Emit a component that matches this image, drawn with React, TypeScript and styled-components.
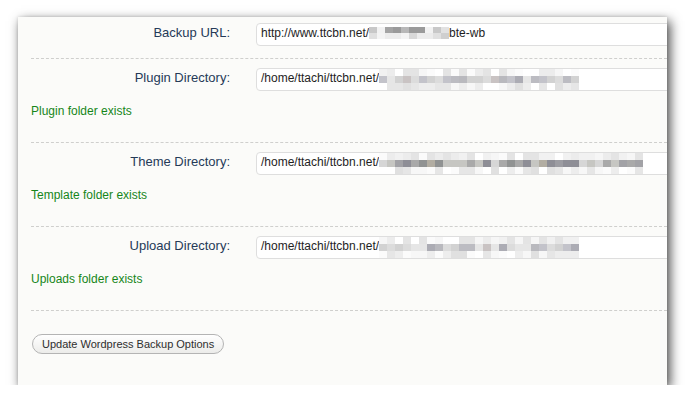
import React from "react";
import styled, { createGlobalStyle } from "styled-components";

const Global = createGlobalStyle`
  html, body { margin: 0; padding: 0; background: #ffffff; }
  body { font-family: "Liberation Sans", Arial, sans-serif; }
`;

const Panel = styled.form`
  margin: 17px 0 0 18px;
  width: 649px;
  background: #fbfbf9;
  box-shadow: 3px 4px 11px rgba(0, 0, 0, 0.72), 0 0 3px rgba(0, 0, 0, 0.12);
  overflow: hidden;
  padding-left: 13px;
  box-sizing: border-box;
`;

const Section = styled.div<{ $top: number; $bottom: number; $last?: boolean }>`
  padding-top: ${(p) => p.$top}px;
  padding-bottom: ${(p) => p.$bottom}px;
  border-bottom: ${(p) => (p.$last ? "none" : "1px dashed #cfcfcd")};
`;

const FieldRow = styled.div`
  display: grid;
  grid-template-columns: 199px 1fr;
  column-gap: 26px;
  align-items: baseline;
`;

const Label = styled.label`
  text-align: right;
  font-size: 13px;
  line-height: 16px;
  color: #253a58;
  white-space: nowrap;
`;

const Field = styled.div`
  display: flex;
  align-items: flex-start;
  width: 440px;
  height: 23px;
  box-sizing: border-box;
  padding: 0 4px;
  background: #ffffff;
  border: 1px solid #dedede;
  border-radius: 4px;
  font-size: 12px;
  color: #1e1e1e;
  white-space: nowrap;
  overflow: hidden;
`;

const FieldText = styled.span`
  flex: none;
  line-height: 18px;
`;

const MosaicGrid = styled.span<{ $cols: number; $rowH: number; $top: number }>`
  flex: none;
  display: inline-grid;
  grid-template-columns: repeat(${(p) => p.$cols}, 8px);
  grid-auto-rows: ${(p) => p.$rowH}px;
  margin-top: ${(p) => p.$top}px;
`;

const Cell = styled.span<{ $c: string }>`
  background: ${(p) => p.$c};
`;

const Status = styled.div`
  margin-top: 13px;
  font-size: 12px;
  line-height: 15px;
  color: #16861a;
`;

const Button = styled.button`
  margin-left: 1px;
  height: 20px;
  padding: 0 9px;
  border: 1px solid #b4b4b4;
  border-radius: 11px;
  background: linear-gradient(#ffffff, #ececea);
  font-family: "Liberation Sans", Arial, sans-serif;
  font-size: 11px;
  color: #2e2e2e;
  line-height: 18px;
`;

type MosaicProps = { cols: number; rowH: number; top: number; rows: string[][]; seed: number };

function pick(i: number, r: number, seed: number, len: number) {
  const v = Math.sin(i * 12.9898 + r * 78.233 + seed * 3.17) * 43758.5453;
  return Math.floor(Math.abs(v - Math.trunc(v)) * len) % len;
}

function Mosaic({ cols, rowH, top, rows, seed }: MosaicProps) {
  const cells: React.ReactNode[] = [];
  rows.forEach((palette, r) => {
    for (let i = 0; i < cols; i++) {
      cells.push(<Cell key={`${r}-${i}`} $c={palette[pick(i, r, seed, palette.length)]} />);
    }
  });
  return (
    <MosaicGrid $cols={cols} $rowH={rowH} $top={top} aria-hidden>
      {cells}
    </MosaicGrid>
  );
}

const lightTop = ["#f6f6f6", "#ececec", "#fbfbfb", "#e4e4e4", "#f1f1f1", "#ffffff"];
const lightBottom = ["#ededed", "#e0e0e0", "#f7f7f7", "#e6e6e6", "#fbfbfb", "#ffffff"];
const darkMid = ["#9c9ca2", "#a9a9a9", "#c6c6c2", "#909292", "#b2ada2", "#8e8e96", "#a2a2a6", "#d6d6d6"];
const softMid = ["#c3c3ca", "#b9b9be", "#d2d2d2", "#acacb4", "#c9c3c3", "#dcdcdc", "#bcbcc2", "#e6e6e6"];

const dirs = [
  { label: "Plugin Directory:", status: "Plugin folder exists", cols: 25, mid: softMid, seed: 2 },
  { label: "Theme Directory:", status: "Template folder exists", cols: 33, mid: darkMid, seed: 5 },
  { label: "Upload Directory:", status: "Uploads folder exists", cols: 25, mid: softMid, seed: 9 },
];

export default function App() {
  return (
    <>
      <Global />
      <Panel onSubmit={(e) => e.preventDefault()}>
        <Section $top={6} $bottom={12}>
          <FieldRow>
            <Label>Backup URL:</Label>
            <Field role="textbox">
              <FieldText>http://www.ttcbn.net/</FieldText>
              <Mosaic
                cols={10}
                rowH={6}
                top={3}
                seed={1}
                rows={[
                  ["#a4a4a4", "#e2e2e2", "#b8b8b8", "#9a9a9a", "#f2f2f2", "#c8c8c8"],
                  ["#d8d8d8", "#ececec", "#cfcfcf", "#f4f4f4", "#e0e0e0"],
                ]}
              />
              <FieldText>bte-wb</FieldText>
            </Field>
          </FieldRow>
        </Section>
        {dirs.map((d) => (
          <Section key={d.label} $top={9} $bottom={23}>
            <FieldRow>
              <Label>{d.label}</Label>
              <Field role="textbox">
                <FieldText>/home/ttachi/ttcbn.net/</FieldText>
                <Mosaic cols={d.cols} rowH={7} top={0} seed={d.seed} rows={[lightTop, d.mid, lightBottom]} />
              </Field>
            </FieldRow>
            <Status>{d.status}</Status>
          </Section>
        ))}
        <Section $top={23} $bottom={31} $last>
          <Button type="submit">Update Wordpress Backup Options</Button>
        </Section>
      </Panel>
    </>
  );
}
